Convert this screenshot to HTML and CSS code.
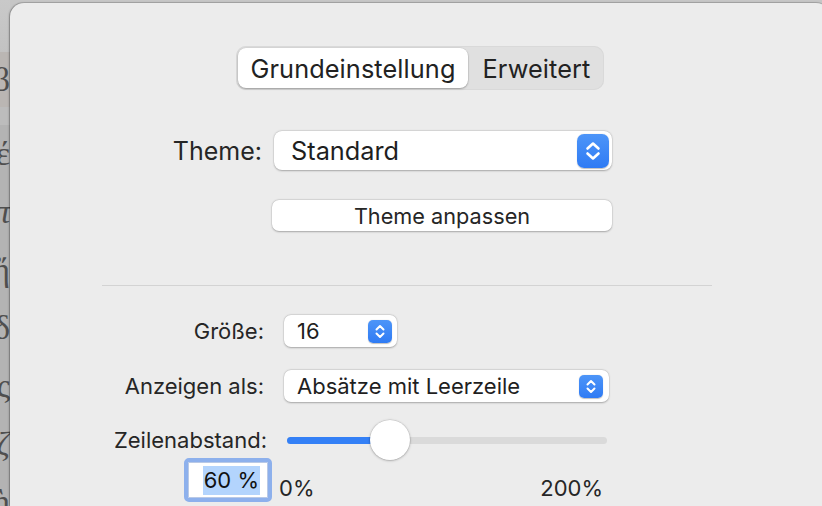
FILE: index.html
```html
<!DOCTYPE html>
<html lang="de">
<head>
<meta charset="utf-8">
<title>Einstellungen</title>
<link rel="stylesheet" href="styles.css">
</head>
<body>
<div class="window">
  <aside class="sidebar">
    <div class="sb-top"></div>
    <div class="sb-row sb-sel"><span>β</span></div>
    <div class="sb-gap"></div>
    <div class="sb-row"><span>έ</span></div>
    <div class="sb-row"><span class="it">π</span></div>
    <div class="sb-row"><span>ἤ</span></div>
    <div class="sb-row"><span>δ</span></div>
    <div class="sb-row"><span>ος</span></div>
    <div class="sb-row"><span class="it">ζ</span></div>
    <div class="sb-row"><span>ὴ</span></div>
  </aside>
  <main class="panel">
    <div class="seg-wrap">
      <div class="seg">
        <span class="seg-item seg-active">Grundeinstellung</span>
        <span class="seg-item seg-second">Erweitert</span>
      </div>
    </div>

    <div class="row theme-row">
      <span class="lbl lbl-theme">Theme:</span>
      <div class="popup popup-lg">
        <span class="popup-text">Standard</span>
        <span class="stepper stepper-lg">
          <svg width="32" height="34" viewBox="0 0 32 34"><path d="M10.5 14.5 L16 9.5 L21.5 14.5 M10.5 19.5 L16 24.5 L21.5 19.5" fill="none" stroke="#fff" stroke-width="2.6" stroke-linecap="round" stroke-linejoin="round"/></svg>
        </span>
      </div>
    </div>

    <div class="row btn-row">
      <button class="btn">Theme anpassen</button>
    </div>

    <div class="sep"></div>

    <div class="row size-row">
      <span class="lbl">Größe:</span>
      <div class="popup popup-sm popup-size">
        <span class="popup-text">16</span>
        <span class="stepper stepper-sm">
          <svg width="24" height="23" viewBox="0 0 24 23"><path d="M8.5 9.5 L12 6 L15.5 9.5 M8.5 13.5 L12 17 L15.5 13.5" fill="none" stroke="#fff" stroke-width="2" stroke-linecap="round" stroke-linejoin="round"/></svg>
        </span>
      </div>
    </div>

    <div class="row show-row">
      <span class="lbl">Anzeigen als:</span>
      <div class="popup popup-sm popup-wide">
        <span class="popup-text">Absätze mit Leerzeile</span>
        <span class="stepper stepper-sm stepper-wide">
          <svg width="24" height="23" viewBox="0 0 24 23"><path d="M8.5 9.5 L12 6 L15.5 9.5 M8.5 13.5 L12 17 L15.5 13.5" fill="none" stroke="#fff" stroke-width="2" stroke-linecap="round" stroke-linejoin="round"/></svg>
        </span>
      </div>
    </div>

    <div class="row slider-row">
      <span class="lbl lbl-slider">Zeilenabstand:</span>
      <div class="slider">
        <div class="track"><div class="fill" style="width: 103px"></div></div>
        <div class="knob" style="left: 83px"></div>
      </div>
    </div>

    <div class="row field-row">
      <div class="field"><span class="field-sel">60 %</span></div>
      <span class="tick tick-min">0%</span>
      <span class="tick tick-max">200%</span>
    </div>
  </main>
</div>
</body>
</html>
```

FILE: styles.css
```css
* { box-sizing: border-box; }

html, body {
  margin: 0;
  padding: 0;
  width: 822px;
  height: 506px;
  overflow: hidden;
  background: #c6c6c6;
  font-family: "Inter", "Liberation Sans", sans-serif;
  color: #262626;
}

.window {
  display: flex;
  width: 822px;
  height: 506px;
  overflow: hidden;
}

/* sidebar behind the sheet */
.sidebar {
  flex: 0 0 10px;
  width: 10px;
  display: flex;
  flex-direction: column;
  background: #b3b3b3;
  overflow: hidden;
  font-family: "Liberation Serif", "DejaVu Serif", serif;
  font-size: 34px;
  color: #4f4f4f;
}
.sb-top { flex: 0 0 52px; background: linear-gradient(#c9c9c9, #c2c2c2); }
.sb-gap { flex: 0 0 18px; background: #bcbcbc; }
.sb-row {
  flex: 0 0 58px;
  display: flex;
  justify-content: flex-end;
  align-items: center;
  white-space: nowrap;
  overflow: hidden;
}
.sb-row span { display: block; line-height: 1; }
.sb-row .it { font-style: italic; }
.sb-sel { flex-basis: 55px; background: #bab6b3; }

/* the sheet */
.panel {
  flex: 0 0 820px;
  width: 820px;
  margin-top: 3px;
  height: 503px;
  background: #ececec;
  border-radius: 14px 14px 0 0;
  box-shadow: 0 0 0 1px rgba(0,0,0,0.12), -1px 0 2px rgba(0,0,0,0.25);
  display: flex;
  flex-direction: column;
  padding-top: 43px;
}

/* segmented control */
.seg-wrap { display: flex; justify-content: center; }
.seg {
  display: flex;
  padding: 2px;
  height: 44px;
  background: #e0e0e0;
  border-radius: 10px;
  box-shadow: inset 0 0 0 1px #d9d9d9;
}
.seg-item {
  display: flex;
  align-items: center;
  justify-content: center;
  font-size: 25.3px;
  letter-spacing: 0.1px;
  border-radius: 8px;
  color: #222;
}
.seg-active {
  width: 230px;
  background: #fff;
  box-shadow: 0 1px 2px rgba(0,0,0,0.28), 0 0 0 0.5px rgba(0,0,0,0.08);
}
.seg-second { width: 134px; padding-left: 3px; }

/* rows */
.row { display: flex; align-items: center; }
.lbl {
  flex: 0 0 254px;
  text-align: right;
  font-size: 22px;
  color: #262626;
}

.theme-row { margin-top: 41px; height: 39px; }
.lbl-theme { flex-basis: 252px; font-size: 25px; }

.popup {
  position: relative;
  display: flex;
  align-items: center;
  background: #fff;
  border-radius: 8px;
  box-shadow: 0 0.5px 2px rgba(0,0,0,0.28), 0 0 0 0.5px rgba(0,0,0,0.06);
}
.popup-lg { margin-left: 12px; width: 338px; height: 39px; padding-left: 17px; font-size: 25.3px; }
.popup-sm { margin-left: 20px; height: 32px; padding-left: 13px; font-size: 22px; border-radius: 7px; }
.popup-size { width: 113px; }
.popup-wide { width: 325px; }
.popup-text { flex: 1; color: #1f1f1f; }

.stepper {
  display: flex;
  background: linear-gradient(#4d95f8, #2f7bf4);
  box-shadow: 0 0.5px 1px rgba(0,0,0,0.25);
}
.stepper-lg { width: 32px; height: 34px; border-radius: 7px; margin-right: 3px; }
.stepper-sm { width: 24px; height: 23px; border-radius: 5px; margin-right: 5px; }
.stepper-wide { margin-right: 6px; }

.btn-row { margin-top: 30px; padding-left: 262px; }
.btn {
  width: 340px;
  height: 31px;
  border: none;
  border-radius: 7px;
  background: #fff;
  box-shadow: 0 0.5px 2px rgba(0,0,0,0.28), 0 0 0 0.5px rgba(0,0,0,0.06);
  font-family: "Inter", "Liberation Sans", sans-serif;
  font-size: 21.7px;
  color: #262626;
  padding: 0;
}

.sep {
  margin: 54px 0 0 92px;
  width: 610px;
  height: 1px;
  background: #d3d3d3;
}

.size-row { margin-top: 29px; }
.show-row { margin-top: 23px; }

.slider-row { margin-top: 20px; height: 36px; }
.lbl-slider { flex-basis: 257px; }
.slider {
  position: relative;
  margin-left: 20px;
  width: 320px;
  height: 36px;
  display: flex;
  align-items: center;
}
.track {
  width: 100%;
  height: 7px;
  border-radius: 4px;
  background: #dadada;
  overflow: hidden;
}
.fill { height: 100%; background: #3480f6; }
.knob {
  position: absolute;
  top: -2px;
  width: 40px;
  height: 40px;
  border-radius: 50%;
  background: #fff;
  box-shadow: 0 0.5px 2.5px rgba(0,0,0,0.35), 0 0 0 0.5px rgba(0,0,0,0.08);
}

.field-row { height: 44px; padding-left: 174px; align-items: stretch; }
.field {
  width: 88px;
  height: 44px;
  border: 4px solid #8db0ec;
  border-radius: 5px;
  background: #fff;
  display: flex;
  justify-content: flex-end;
  align-items: center;
  padding-right: 8px;
  box-shadow: inset 0 0 0 1px #b9c9e6;
}
.field-sel {
  background: #b3d4fd;
  height: 29px;
  line-height: 29px;
  padding: 0 1px;
  font-size: 22px;
  color: #111;
}
.tick {
  font-size: 22px;
  color: #262626;
  align-self: flex-end;
  line-height: 1;
  padding-bottom: 3px;
}
.tick-min { margin-left: 7px; }
.tick-max { margin-left: auto; margin-right: 227px; }
```
